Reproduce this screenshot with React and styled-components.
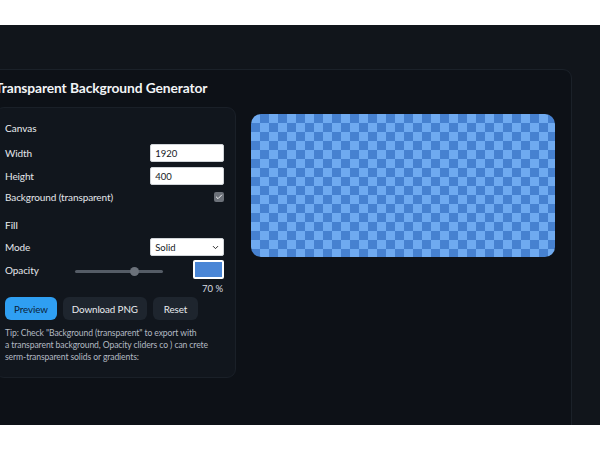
import React from "react";
import styled, { createGlobalStyle } from "styled-components";
import { Check, ChevronDown } from "lucide-react";

const Global = createGlobalStyle`
  html, body {
    margin: 0;
    background: #ffffff;
    font-family: Lato, "Open Sans", sans-serif;
  }
`;

const Stage = styled.div`
  margin-top: 25px;
  height: 400px;
  background: #11151b;
  overflow: hidden;
  padding-top: 44px;
  box-sizing: border-box;
`;

const Card = styled.div`
  margin-left: -22px;
  width: 594px;
  height: 420px;
  box-sizing: border-box;
  padding: 8px 16px;
  background: #0d1117;
  border: 1px solid #1b2129;
  border-radius: 9px;
`;

const Title = styled.h1`
  margin: 0 0 9px;
  font-size: 13.8px;
  line-height: 20px;
  font-weight: 700;
  color: #f2f4f6;
  letter-spacing: -0.1px;
  white-space: nowrap;
`;

const Row = styled.div`
  display: flex;
  gap: 15px;
  align-items: flex-start;
`;

const Panel = styled.div`
  width: 242px;
  box-sizing: border-box;
  padding: 11px 11px 14px 9px;
  background: #11161d;
  border: 1px solid #1a2028;
  border-radius: 9px;
  display: flex;
  flex-direction: column;
  color: #e4e7eb;
`;

const Heading = styled.div`
  font-size: 10px;
  line-height: 18px;
  margin-top: ${(p) => p.$top || 0}px;
  color: #eceff2;
`;

const Field = styled.div`
  display: flex;
  align-items: center;
  justify-content: space-between;
  height: ${(p) => p.$h || 18}px;
  margin-top: ${(p) => p.$top || 0}px;
  font-size: 10px;
  letter-spacing: -0.1px;
`;

const TextInput = styled.input`
  width: 74px;
  height: 18px;
  box-sizing: border-box;
  border: 1px solid #d0d4d8;
  border-radius: 2px;
  padding: 0 4px;
  font-family: inherit;
  font-size: 9.5px;
  color: #15191e;
  background: #ffffff;
  outline: none;
`;

const Box = styled.span`
  width: 10px;
  height: 10px;
  border-radius: 2px;
  background: #6c7179;
  display: flex;
  align-items: center;
  justify-content: center;
  color: #f3f4f6;
`;

const SelectWrap = styled.div`
  position: relative;
  width: 74px;
  height: 18px;
`;

const Select = styled.select`
  appearance: none;
  width: 100%;
  height: 100%;
  box-sizing: border-box;
  border: 1px solid #d0d4d8;
  border-radius: 2px;
  padding: 0 4px;
  font-family: inherit;
  font-size: 9.5px;
  color: #15191e;
  background: #ffffff;
`;

const Chevron = styled(ChevronDown)`
  position: absolute;
  right: 4px;
  top: 5px;
  pointer-events: none;
  color: #222;
`;

const OpacityLeft = styled.div`
  display: flex;
  align-items: center;
`;

const Label = styled.span`
  width: 70px;
`;

const Range = styled.input`
  appearance: none;
  -webkit-appearance: none;
  width: 88px;
  height: 3px;
  margin: 4px 0 0;
  border-radius: 2px;
  background: #555c66;
  outline: none;
  &::-webkit-slider-thumb {
    -webkit-appearance: none;
    width: 9px;
    height: 9px;
    border-radius: 50%;
    background: #6b717a;
  }
`;

const Swatch = styled.div`
  width: 31px;
  height: 19px;
  box-sizing: border-box;
  border: 2px solid #ffffff;
  border-radius: 2px;
  background: #4a86d6;
`;

const Percent = styled.div`
  text-align: right;
  font-size: 9.5px;
  line-height: 12px;
  margin-top: 4px;
  padding-right: 1px;
  color: #d8dce0;
`;

const Buttons = styled.div`
  display: flex;
  gap: 6px;
  margin-top: 2px;
`;

const Button = styled.button`
  height: 23px;
  padding: 0 ${(p) => p.$pad || 9}px;
  border: none;
  border-radius: 6px;
  font-family: inherit;
  font-size: 9.8px;
  letter-spacing: -0.1px;
  background: ${(p) => (p.$primary ? "#2f9ff2" : "#1e252e")};
  color: ${(p) => (p.$primary ? "#0b2136" : "#e8ebef")};
`;

const Tip = styled.p`
  margin: 7px 0 0;
  font-size: 8.6px;
  line-height: 12px;
  letter-spacing: -0.1px;
  white-space: nowrap;
  color: #b3bac2;
`;

const Preview = styled.div`
  margin-top: 7px;
  width: 305px;
  height: 143px;
  border-radius: 10px;
  background: repeating-conic-gradient(#4681d0 0 25%, #6faaf0 0 50%) 0 0 / 18px 18px;
`;

export default function App() {
  return (
    <>
      <Global />
      <Stage>
        <Card>
          <Title>Transparent Background Generator</Title>
          <Row>
            <Panel>
              <Heading>Canvas</Heading>
              <Field $top={7}>
                <span>Width</span>
                <TextInput defaultValue="1920" />
              </Field>
              <Field $top={5}>
                <span>Height</span>
                <TextInput defaultValue="400" />
              </Field>
              <Field $top={5} $h={14}>
                <span>Background (transparent)</span>
                <Box>
                  <Check size={8} strokeWidth={3} />
                </Box>
              </Field>
              <Heading $top={12}>Fill</Heading>
              <Field $top={4}>
                <span>Mode</span>
                <SelectWrap>
                  <Select defaultValue="solid">
                    <option value="solid">Solid</option>
                    <option value="gradient">Gradient</option>
                  </Select>
                  <Chevron size={9} strokeWidth={2.5} />
                </SelectWrap>
              </Field>
              <Field $top={4} $h={19}>
                <OpacityLeft>
                  <Label>Opacity</Label>
                  <Range type="range" min="0" max="100" defaultValue="70" />
                </OpacityLeft>
                <Swatch />
              </Field>
              <Percent>70 %</Percent>
              <Buttons>
                <Button $primary $pad={9}>Preview</Button>
                <Button $pad={9}>Download PNG</Button>
                <Button $pad={11}>Reset</Button>
              </Buttons>
              <Tip>
                Tip: Check "Background (transparent" to export with
                <br />
                a transparent background, Opacity cliders co ) can crete
                <br />
                serm-transparent solids or gradients:
              </Tip>
            </Panel>
            <Preview />
          </Row>
        </Card>
      </Stage>
    </>
  );
}
